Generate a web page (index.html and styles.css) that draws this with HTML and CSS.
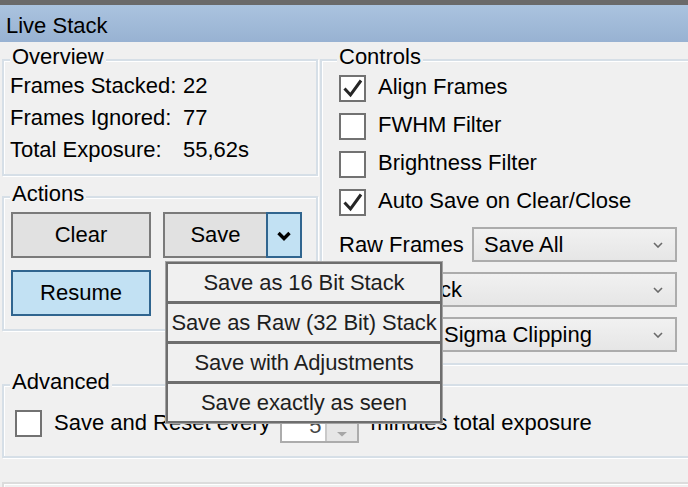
FILE: index.html
```html
<!DOCTYPE html>
<html>
<head>
<meta charset="utf-8">
<title>Live Stack</title>
<link rel="stylesheet" href="styles.css">
</head>
<body>
<div class="window">
  <div class="topbar"></div>
  <div class="titlebar">Live Stack</div>
  <div class="content">
    <div class="top">
      <div class="leftcol">
        <section class="group overview">
          <div class="legend">Overview</div>
          <div class="stats">
            <span>Frames Stacked:</span><span>22</span>
            <span>Frames Ignored:</span><span>77</span>
            <span>Total Exposure:</span><span>55,62s</span>
          </div>
        </section>
        <section class="group actions">
          <div class="legend">Actions</div>
          <div class="btnrow first">
            <button class="btn btn-wide">Clear</button>
            <div class="split">
              <button class="btn split-main">Save</button>
              <button class="btn btn-blue split-arrow"><svg width="16" height="10" viewBox="0 0 16 10"><polyline points="2.5,2 8,7.5 13.5,2" fill="none" stroke="#000" stroke-width="3.4"/></svg></button>
            </div>
          </div>
          <div class="btnrow">
            <button class="btn btn-wide btn-blue">Resume</button>
          </div>
        </section>
      </div>
      <section class="group controls">
        <div class="legend">Controls</div>
        <div class="check-row">
          <span class="checkbox"><svg width="23" height="23" viewBox="0 0 23 23"><polyline points="3.5,11.5 9.5,18 20,3.5" fill="none" stroke="#262626" stroke-width="3"/></svg></span>
          <span class="label">Align Frames</span>
        </div>
        <div class="check-row">
          <span class="checkbox"></span>
          <span class="label">FWHM Filter</span>
        </div>
        <div class="check-row">
          <span class="checkbox"></span>
          <span class="label">Brightness Filter</span>
        </div>
        <div class="check-row">
          <span class="checkbox"><svg width="23" height="23" viewBox="0 0 23 23"><polyline points="3.5,11.5 9.5,18 20,3.5" fill="none" stroke="#262626" stroke-width="3"/></svg></span>
          <span class="label">Auto Save on Clear/Close</span>
        </div>
        <div class="combo-row first wide">
          <span class="label">Raw Frames</span>
          <div class="combo"><span>Save All</span><svg width="10" height="6" viewBox="0 0 10 6"><polyline points="1,1 5,5 9,1" fill="none" stroke="#6a6a6a" stroke-width="1.6"/></svg></div>
        </div>
        <div class="combo-row narrow">
          <span></span>
          <div class="combo"><span>Stack</span><svg width="10" height="6" viewBox="0 0 10 6"><polyline points="1,1 5,5 9,1" fill="none" stroke="#6a6a6a" stroke-width="1.6"/></svg></div>
        </div>
        <div class="combo-row clip">
          <span></span>
          <div class="combo"><span>Sigma Clipping</span><svg width="10" height="6" viewBox="0 0 10 6"><polyline points="1,1 5,5 9,1" fill="none" stroke="#6a6a6a" stroke-width="1.6"/></svg></div>
        </div>
      </section>
    </div>
    <section class="group advanced">
      <div class="legend">Advanced</div>
      <div class="adv-row">
        <span class="checkbox"></span>
        <span class="label adv-label">Save and Reset every</span>
        <div class="spin">
          <div class="spin-input">5</div>
          <div class="spin-btns">
            <div class="spin-btn"><svg width="12" height="6" viewBox="0 0 12 6"><polygon points="1,5 6,0.5 11,5" fill="#a6a6a6"/></svg></div>
            <div class="spin-btn"><svg width="12" height="6" viewBox="0 0 12 6"><polygon points="1,1 6,5.5 11,1" fill="#a6a6a6"/></svg></div>
          </div>
        </div>
        <span class="label adv-after">minutes total exposure</span>
      </div>
    </section>
    <div class="group bottom"></div>
  </div>
  <div class="menu">
    <div class="menu-item">Save as 16 Bit Stack</div>
    <div class="menu-item">Save as Raw (32 Bit) Stack</div>
    <div class="menu-item">Save with Adjustments</div>
    <div class="menu-item">Save exactly as seen</div>
  </div>
</div>
</body>
</html>
```

FILE: styles.css
```css
* { box-sizing: border-box; }
html, body { margin: 0; padding: 0; }
body {
  width: 688px;
  height: 487px;
  overflow: hidden;
  background: #f0f0f0;
  font-family: "Liberation Sans", Arial, sans-serif;
  font-size: 22px;
  color: #000;
}
.window { position: relative; height: 487px; overflow: hidden; }
.topbar { height: 5px; background: #6a6a6a; }
.titlebar {
  height: 37px;
  padding: 4px 0 0 6px;
  line-height: 33px;
  background: linear-gradient(#aac3df, #98b2d2);
}
.content { padding-left: 2px; margin-right: -12px; }
.top {
  display: grid;
  grid-template-columns: 316px 1fr;
  column-gap: 2px;
  margin-top: 17px;
  align-items: start;
}
.group {
  border: 2px solid #d6dfe7;
  box-shadow: inset 1px 1px 0 #fff, 1px 1px 0 #fff;
}
.legend {
  width: fit-content;
  height: 25px;
  line-height: 25px;
  margin: -17px 0 0 6px;
  padding: 0 2px;
  background: #f0f0f0;
  white-space: nowrap;
}
.label { line-height: 25px; white-space: nowrap; }

/* Overview */
.stats {
  display: grid;
  grid-template-columns: 173px auto;
  margin-top: 1px;
  padding: 0 0 8px 6px;
  line-height: 32px;
}

/* Actions */
.actions { margin-top: 20px; padding-bottom: 13px; }
.btnrow { display: flex; gap: 12px; padding-left: 7px; margin-top: 12px; }
.btnrow.first { margin-top: 6px; }
.btn {
  height: 46px;
  border: 2px solid #7a7a7a;
  background: #e1e1e1;
  font: inherit;
  color: #000;
  padding: 0;
  display: flex;
  align-items: center;
  justify-content: center;
}
.btn-wide { width: 140px; }
.btn-blue { background: #c2e1f3; border-color: #30658f; }
.split { display: flex; }
.split-main { width: 105px; }
.split-arrow { width: 36px; margin-left: -2px; padding-top: 1px; }

/* Controls */
.controls { padding-bottom: 11px; }
.controls .legend { margin-left: 15px; }
.check-row {
  display: flex;
  align-items: center;
  height: 38px;
  padding-left: 17px;
}
.checkbox {
  width: 27px;
  height: 27px;
  flex: none;
  border: 2px solid #727272;
  background: #fff;
  display: flex;
  align-items: center;
  justify-content: center;
}
.check-row .label { margin-left: 12px; padding-bottom: 4px; }
.combo-row {
  display: grid;
  align-items: center;
  padding-left: 17px;
  margin-top: 10px;
  padding-right: 21px;
}
.combo-row.first { margin-top: 6px; }
.combo-row.wide { grid-template-columns: 133px 1fr; }
.combo-row.narrow { grid-template-columns: 56px 1fr; }
.combo-row.clip { grid-template-columns: 93px 1fr; }
.combo {
  height: 35px;
  border: 2px solid #acacac;
  background: linear-gradient(#f1f1f1, #e6e6e6);
  display: flex;
  align-items: center;
  justify-content: space-between;
  padding: 0 12px 0 10px;
  white-space: nowrap;
  line-height: 25px;
}

/* Advanced */
.advanced { margin-top: 19px; padding-bottom: 13px; }
.adv-row {
  display: flex;
  align-items: flex-start;
  padding-left: 11px;
  margin-top: 15px;
}
.adv-row .checkbox { margin-top: 1px; }
.adv-label { margin: 1px 0 0 12px; }
.adv-after { margin: 1px 0 0 11px; }
.spin {
  margin-left: 10px;
  height: 34px;
  display: flex;
  border: 2px solid #acacac;
}
.spin-input {
  width: 43px;
  background: #fff;
  text-align: right;
  padding-right: 4px;
  line-height: 30px;
  color: #444;
}
.spin-btns {
  width: 32px;
  display: flex;
  flex-direction: column;
  border-left: 2px solid #c9c9c9;
  background: #e6e6e6;
}
.spin-btn {
  flex: 1;
  display: flex;
  align-items: center;
  justify-content: center;
}
.bottom { margin-top: 24px; height: 30px; border-color: #dcdcdc; }

/* Dropdown menu */
.menu {
  position: absolute;
  left: 165px;
  top: 261px;
  width: 278px;
  border: 1px solid #a3a3a3;
  background: #f0f0f0;
  color: #1e1e1e;
}
.menu-item {
  height: 41px;
  border: 2px solid #6e6e6e;
  display: flex;
  align-items: center;
  justify-content: center;
  white-space: nowrap;
  letter-spacing: -0.1px;
}
.menu-item + .menu-item { margin-top: -1px; }
```
